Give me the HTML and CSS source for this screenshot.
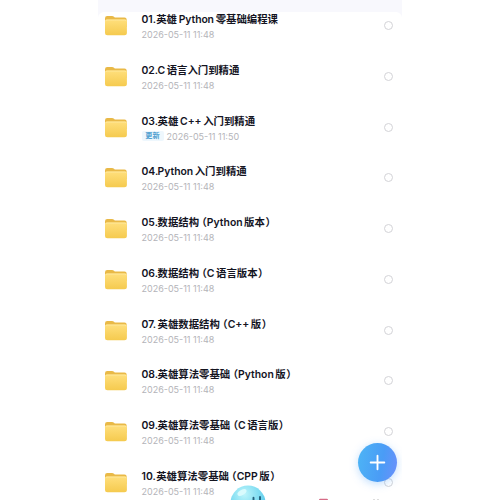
FILE: index.html
```
<!DOCTYPE html>
<html lang="zh-CN">
<head>
<meta charset="utf-8">
<title>文件</title>
<link rel="stylesheet" href="styles.css">
</head>
<body>
<svg class="defs" width="0" height="0" aria-hidden="true">
  <defs>
    <linearGradient id="front" x1="0" y1="0" x2="0" y2="1"><stop offset="0" stop-color="#ffdf7c"/><stop offset="1" stop-color="#f5ca4e"/></linearGradient>
    <radialGradient id="ball" cx=".4" cy=".25" r=".7"><stop offset="0" stop-color="#bdf5fb"/><stop offset=".6" stop-color="#7edcf1"/><stop offset="1" stop-color="#4fc3e8"/></radialGradient>
    <symbol id="folder" viewBox="0 0 24 22">
      <path d="M1 3.200Q1 1 3.200 1H8q1.200 0 2 .8l.8.7H20.500q2.200 0 2.200 2.200V12H1Z" fill="#e9b947"/>
      <path d="M1 6.300Q1 4.500 2.800 4.500H21q1.900 0 1.900 1.900V17.800q0 2.500-2.500 2.500H3.500Q1 20.300 1 17.800Z" fill="url(#front)"/>
      <path d="M1.500 6.200q.2-1.200 1.500-1.200h17.900q1.200 0 1.500 1.200" fill="none" stroke="#ffeba5" stroke-width=".8"/>
    </symbol>
  </defs>
</svg>
<main class="screen">
  <ul class="list">
    <li class="row"><svg class="folder"><use href="#folder"/></svg><div class="info"><h2><span class="num narrow">01.</span>英雄<span class="latin">Python</span>零基础编程课</h2><p>2026-05-11 11:48</p></div><i class="check"></i></li>
    <li class="row"><svg class="folder"><use href="#folder"/></svg><div class="info"><h2><span class="num">02.</span>C<span class="gap"></span>语言入门到精通</h2><p>2026-05-11 11:48</p></div><i class="check"></i></li>
    <li class="row"><svg class="folder"><use href="#folder"/></svg><div class="info"><h2><span class="num">03.</span>英雄<span class="latin">C++</span>入门到精通</h2><p><b class="tag">更新</b>2026-05-11 11:50</p></div><i class="check"></i></li>
    <li class="row"><svg class="folder"><use href="#folder"/></svg><div class="info"><h2><span class="num">04.</span>Python<span class="gap"></span>入门到精通</h2><p>2026-05-11 11:48</p></div><i class="check"></i></li>
    <li class="row"><svg class="folder"><use href="#folder"/></svg><div class="info"><h2><span class="num">05.</span>数据结构<span class="paren open">（</span>Python<span class="gap"></span>版本<span class="paren">）</span></h2><p>2026-05-11 11:48</p></div><i class="check"></i></li>
    <li class="row"><svg class="folder"><use href="#folder"/></svg><div class="info"><h2><span class="num">06.</span>数据结构<span class="paren open">（</span>C<span class="gap"></span>语言版本<span class="paren">）</span></h2><p>2026-05-11 11:48</p></div><i class="check"></i></li>
    <li class="row"><svg class="folder"><use href="#folder"/></svg><div class="info"><h2><span class="num">07.</span>英雄数据结构<span class="paren open">（</span>C++<span class="gap"></span>版<span class="paren">）</span></h2><p>2026-05-11 11:48</p></div><i class="check"></i></li>
    <li class="row"><svg class="folder"><use href="#folder"/></svg><div class="info"><h2><span class="num">08.</span>英雄算法零基础<span class="paren open">（</span>Python<span class="gap"></span>版<span class="paren">）</span></h2><p>2026-05-11 11:48</p></div><i class="check"></i></li>
    <li class="row"><svg class="folder"><use href="#folder"/></svg><div class="info"><h2><span class="num">09.</span>英雄算法零基础<span class="paren open">（</span>C<span class="gap"></span>语言版<span class="paren">）</span></h2><p>2026-05-11 11:48</p></div><i class="check"></i></li>
    <li class="row"><svg class="folder"><use href="#folder"/></svg><div class="info"><h2><span class="num narrow">10.</span>英雄算法零基础<span class="paren open">（</span>CPP<span class="gap"></span>版<span class="paren">）</span></h2><p>2026-05-11 11:48</p></div><i class="check"></i></li>
  </ul>
  <svg class="mascot" viewBox="0 0 36 36"><circle cx="18" cy="18" r="17.500" fill="url(#ball)"/><ellipse cx="12" cy="7.500" rx="5" ry="2.500" transform="rotate(-30 12 7.500)" fill="#d9fbfd"/><path d="M23.500 12.800v4M30 12v4" stroke="#23617d" stroke-width="1.900" stroke-linecap="round"/></svg>
  <svg class="tabs" viewBox="0 0 70 2"><path d="M1 2q0-1.200 1.200-1.200h6.500Q10 .8 10 2Z" fill="#d66b86"/><path d="M55 1.500h2M59 1.500h2" stroke="#ddd" stroke-width="1"/></svg>
  <button class="add" aria-label="添加"><svg viewBox="0 0 40 40"><path d="M20 13v14M13 20h14" stroke="#fff" stroke-width="1.900" stroke-linecap="round"/></svg></button>
</main>
</body>
</html>
```
FILE: styles.css
```
body {
  margin: 0;
  background: #fff;
  font-family: Inter, "Noto Sans CJK SC", sans-serif;
}
.defs { position: absolute; }
.screen {
  position: relative;
  box-sizing: border-box;
  width: 304px;
  height: 500px;
  margin-left: 98px;
  padding-top: 12px;
  overflow: hidden;
  background: linear-gradient(#f8f8fd 0 20px, #fff 20px);
}
.list {
  margin: 0;
  padding: 0 9px 0 6px;
  list-style: none;
  background: #fff;
  border-radius: 6px 6px 0 0;
}
.row {
  display: flex;
  height: 50.750px;
  align-items: flex-start;
}
.folder {
  width: 24px;
  height: 22px;
  margin-top: 3px;
}
.info {
  flex: 1;
  margin-left: 13.500px;
  white-space: nowrap;
}
h2 {
  margin: 0;
  padding-top: 1px;
  font-size: 10.400px;
  font-weight: 600;
  line-height: 14px;
  color: #14141f;
  text-autospace: no-autospace;
}
.num {
  display: inline-block;
  width: 16px;
}
.num.narrow { width: 14.700px; }
.latin { margin: 0 1.800px; letter-spacing: -.01em; }
.gap { margin-left: 1.500px; }
.paren { font-feature-settings: "halt"; margin: 0 .5px; }
.open { margin-left: 2.600px; margin-right: 0; }
p {
  display: flex;
  align-items: center;
  margin: 1px 0 0;
  font-size: 9px;
  line-height: 13px;
  color: #b4b4b9;
}
.tag {
  width: 22px;
  height: 10px;
  margin-right: 3px;
  border-radius: 2px;
  background: #eef7fd;
  color: #4f9fd0;
  font-size: 7.200px;
  line-height: 10px;
  text-align: center;
}
.check {
  box-sizing: border-box;
  width: 9px;
  height: 9px;
  margin-top: 9px;
  border: 1px solid #d3d3d7;
  border-radius: 50%;
}
.mascot {
  position: absolute;
  left: 132px;
  top: 485px;
  width: 36px;
  height: 36px;
}
.tabs {
  position: absolute;
  left: 220px;
  bottom: 0;
  width: 70px;
  height: 2px;
}
.add {
  position: absolute;
  left: 260px;
  top: 443px;
  width: 39px;
  height: 39px;
  padding: 0;
  border: 0;
  border-radius: 50%;
  background: linear-gradient(100deg, #4db5f5, #4a9cf6 60%, #6c8ffb);
  box-shadow: 0 2px 9px rgba(75, 160, 250, .35);
}
.add svg { display: block; width: 39px; height: 39px; }
```
